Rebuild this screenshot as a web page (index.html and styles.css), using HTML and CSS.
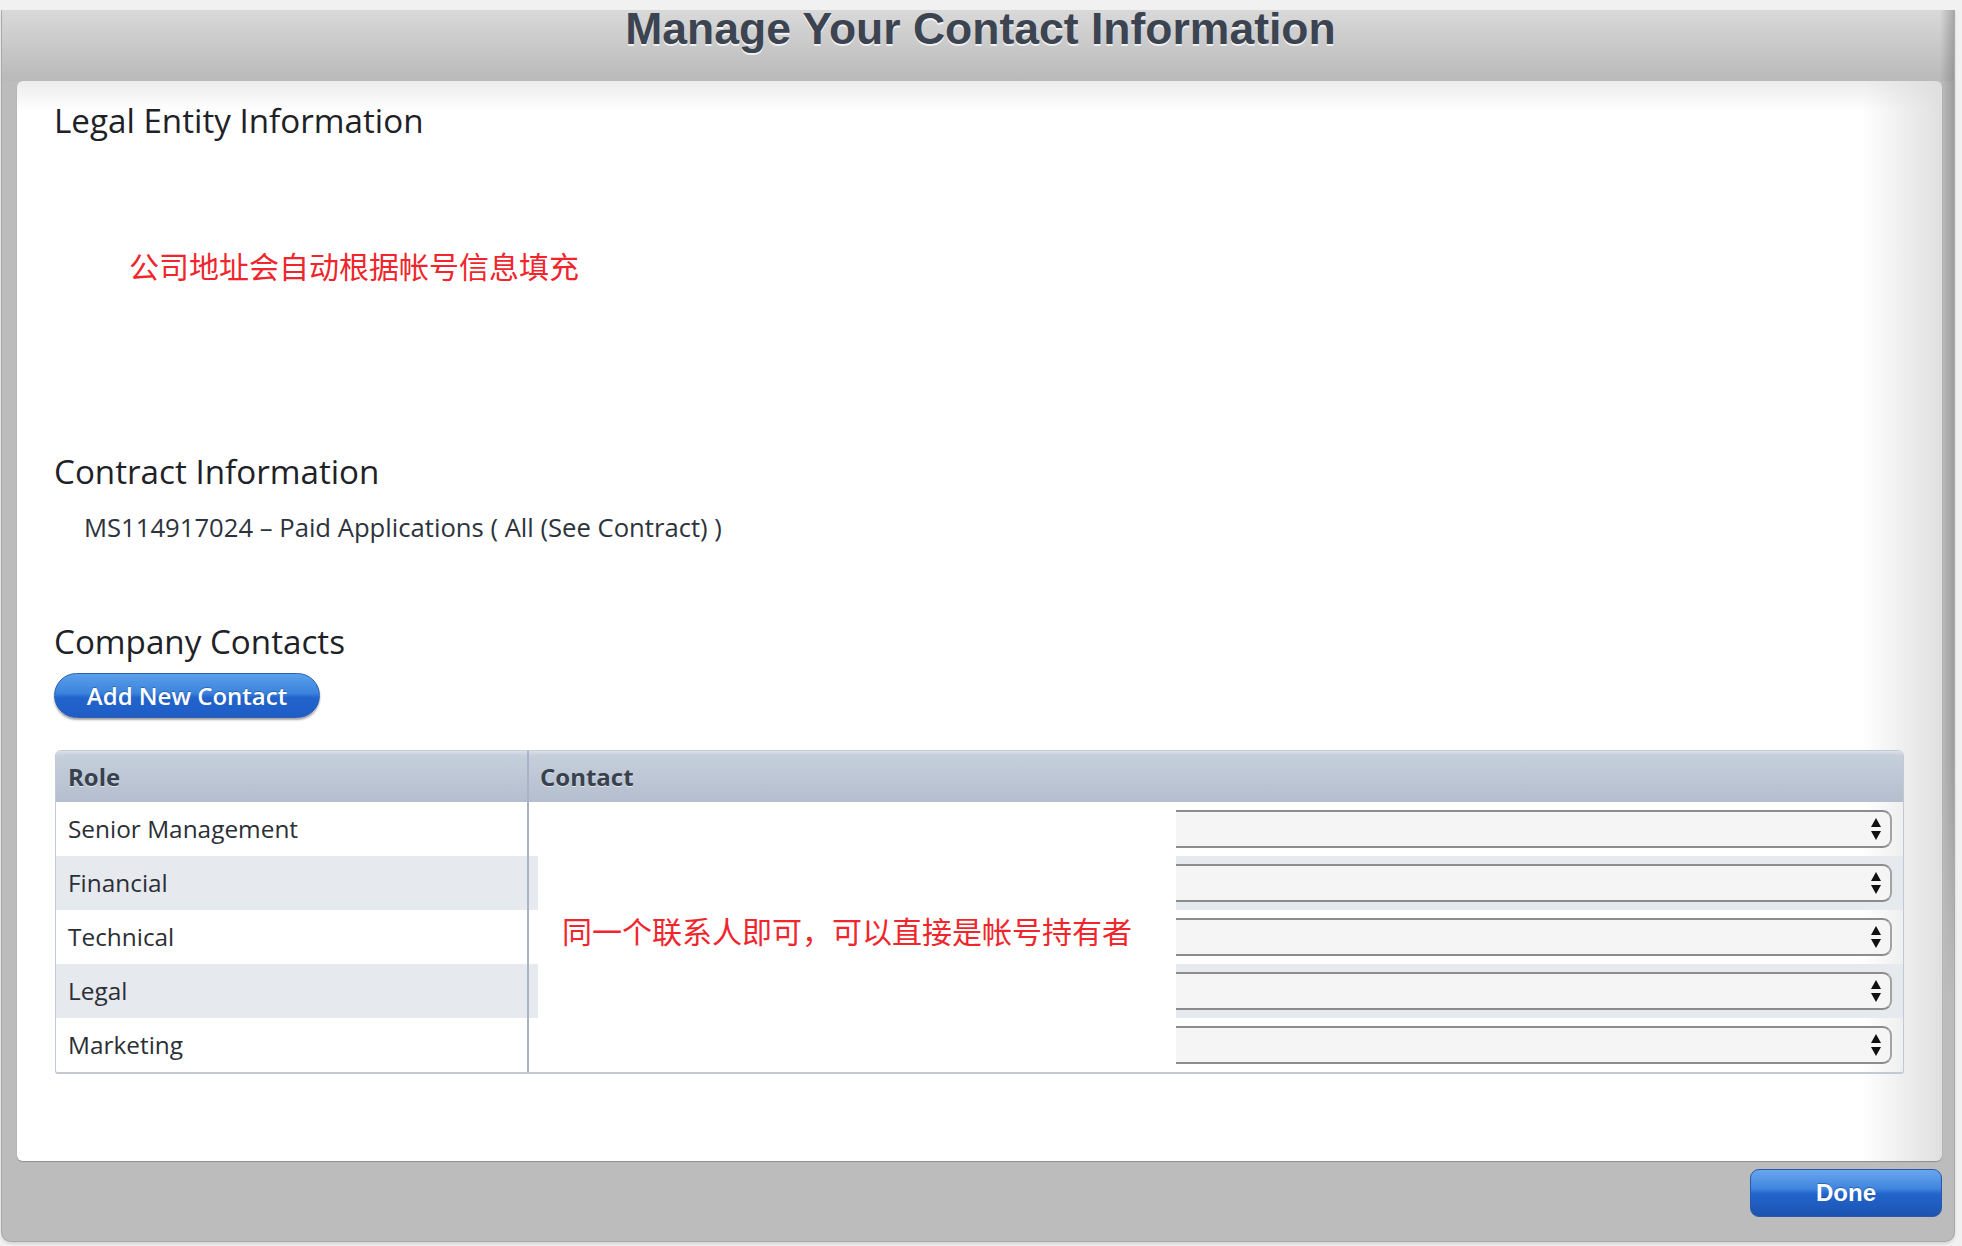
FILE: index.html
```html
<!DOCTYPE html>
<html lang="en">
<head>
<meta charset="utf-8">
<title>Manage Your Contact Information</title>
<link rel="stylesheet" href="styles.css">
</head>
<body>
<div class="dialog">
  <div class="titlebar">
    <h1 class="title">Manage Your Contact Information</h1>
  </div>
  <div class="panel">
    <h2 class="section-title">Legal Entity Information</h2>
    <p class="note note-legal">公司地址会自动根据帐号信息填充</p>
    <h2 class="section-title section-contract">Contract Information</h2>
    <p class="contract-line">MS114917024 – Paid Applications ( All (See Contract) )</p>
    <h2 class="section-title section-contacts">Company Contacts</h2>
    <button class="add-btn" type="button">Add New Contact</button>
    <div class="contacts-table">
      <div class="th th-role">Role</div>
      <div class="th th-contact">Contact</div>
      <div class="roles">
        <div class="role-cell">Senior Management</div>
        <div class="role-cell alt">Financial</div>
        <div class="role-cell">Technical</div>
        <div class="role-cell alt">Legal</div>
        <div class="role-cell">Marketing</div>
      </div>
      <div class="contacts">
        <div class="contact-row"><div class="select"><svg class="arrows" viewBox="0 0 12 24" width="12" height="24"><path d="M6 1 L11 10 L1 10 Z M1 14 L11 14 L6 23 Z" fill="#111"/></svg></div></div>
        <div class="contact-row alt"><div class="select"><svg class="arrows" viewBox="0 0 12 24" width="12" height="24"><path d="M6 1 L11 10 L1 10 Z M1 14 L11 14 L6 23 Z" fill="#111"/></svg></div></div>
        <div class="contact-row"><div class="select"><svg class="arrows" viewBox="0 0 12 24" width="12" height="24"><path d="M6 1 L11 10 L1 10 Z M1 14 L11 14 L6 23 Z" fill="#111"/></svg></div></div>
        <div class="contact-row alt"><div class="select"><svg class="arrows" viewBox="0 0 12 24" width="12" height="24"><path d="M6 1 L11 10 L1 10 Z M1 14 L11 14 L6 23 Z" fill="#111"/></svg></div></div>
        <div class="contact-row"><div class="select"><svg class="arrows" viewBox="0 0 12 24" width="12" height="24"><path d="M6 1 L11 10 L1 10 Z M1 14 L11 14 L6 23 Z" fill="#111"/></svg></div></div>
        <div class="contact-note"><span class="note">同一个联系人即可，可以直接是帐号持有者</span></div>
      </div>
    </div>
  </div>
  <div class="footer">
    <button class="done-btn" type="button">Done</button>
  </div>
</div>
</body>
</html>
```

FILE: styles.css
```css
* { box-sizing: border-box; }
html, body { margin: 0; padding: 0; }
body {
  width: 1962px;
  height: 1246px;
  overflow: hidden;
  background: #f1f1f1;
  font-family: "Open Sans", "Noto Sans CJK SC", sans-serif;
}
.dialog {
  margin: 10px 0 0 1px;
  width: 1954px;
  height: 1232px;
  background:
    linear-gradient(to bottom, rgba(188,188,188,0) 750px, #bcbcbc 1000px) right top / 13px 1000px no-repeat,
    linear-gradient(to right, rgba(120,120,120,0) 0, rgba(120,120,120,.45) 100%) right top / 13px 1000px no-repeat,
    #bcbcbc;
  border: 1px solid #a9a9a9;
  border-top: 0;
  border-radius: 0 0 10px 10px;
  display: flex;
  flex-direction: column;
  box-shadow: 0 2px 3px rgba(0,0,0,.12);
}
.titlebar {
  height: 71px;
  flex: none;
  padding-left: 5px;
  background:
    linear-gradient(to right, rgba(110,110,110,0) calc(100% - 14px), rgba(110,110,110,.45) 100%),
    linear-gradient(to bottom, #d9d9d9 0%, #c9c9c9 50%, #b9b9b9 100%);
  text-align: center;
}
.title {
  margin: 0;
  font-family: "Liberation Sans", Arial, sans-serif;
  font-weight: bold;
  font-size: 44.5px;
  line-height: 38px;
  color: #3b4450;
  text-shadow: 0 2px 0 rgba(255,255,255,.75);
}
.panel {
  flex: none;
  height: 1080px;
  margin: 0 12px 0 15px;
  padding: 20px 37px 0 37px;
  border-radius: 6px;
  background:
    linear-gradient(to right, rgba(255,255,255,0) calc(100% - 80px), rgba(220,220,220,.9) 100%),
    linear-gradient(to bottom, #ececec 0px, #ffffff 30px);
  box-shadow: 0 1px 1px rgba(0,0,0,.25);
  display: flex;
  flex-direction: column;
  align-items: flex-start;
}
.section-title {
  margin: 0;
  font-size: 33.2px;
  line-height: 40px;
  font-weight: 400;
  color: #1e2227;
}
.note {
  color: #f0262c;
  font-family: "Noto Sans CJK SC", sans-serif;
  font-size: 30px;
  line-height: 40px;
}
.note-legal {
  margin: 104px 0 0 75px;
}
.section-contract { margin-top: 167px; }
.contract-line {
  margin: 20px 0 0 30px;
  font-size: 25.65px;
  line-height: 32px;
  color: #2d333c;
}
.section-contacts { margin-top: 78px; }
.add-btn {
  margin-top: 11px;
  width: 266px;
  height: 45px;
  border-radius: 23px;
  border: 1px solid #2b5fb6;
  background: linear-gradient(to bottom, #5aa0ea 0%, #3b82dc 45%, #2264cc 55%, #1f5dc6 100%);
  box-shadow: 0 2px 2px rgba(0,0,0,.35);
  color: #fff;
  font-family: "Open Sans", sans-serif;
  font-weight: 600;
  font-size: 24px;
  line-height: 41px;
  padding: 0;
  text-align: center;
  text-shadow: 0 -1px 0 rgba(0,0,0,.25);
}
.contacts-table {
  margin: 32px 1px 0 1px;
  align-self: stretch;
  display: grid;
  grid-template-columns: 471px 1fr;
  border: 1px solid #c3c9d3;
  border-bottom-width: 2px;
  border-radius: 6px 6px 3px 3px;
  overflow: hidden;
}
.th {
  height: 51px;
  background: linear-gradient(to bottom, #dde2ea 0px, #c6cfdb 4px, #b4bece 100%);
  font-weight: 700;
  font-size: 24px;
  line-height: 51px;
  color: #38414d;
  text-shadow: 0 1px 0 rgba(255,255,255,.6);
}
.th-role { padding-left: 12px; }
.th-contact { padding-left: 11px; border-left: 2px solid #a9b3c5; }
.roles { display: flex; flex-direction: column; }
.role-cell {
  height: 54px;
  padding-left: 12px;
  font-size: 24.4px;
  line-height: 54px;
  color: #2b2f36;
}
.alt { background: #e6e9ee; }
.contacts {
  position: relative;
  border-left: 2px solid #a9b3c5;
  display: flex;
  flex-direction: column;
}
.contact-row {
  height: 54px;
  display: flex;
  align-items: center;
  justify-content: flex-end;
  padding-right: 11px;
}
.select {
  width: 716px;
  height: 38px;
  background: #f5f5f5;
  border-top: 2px solid #8c8c8c;
  border-bottom: 2px solid #8c8c8c;
  border-right: 2px solid #a3a3a3;
  border-radius: 0 9px 9px 0;
  display: flex;
  align-items: center;
  justify-content: flex-end;
  padding-right: 8px;
}
.arrows { display: block; width: 12px; height: 24px; }
.contact-note {
  position: absolute;
  top: 0;
  bottom: 0;
  left: 9px;
  width: 638px;
  background: #fff;
  display: flex;
  align-items: center;
  padding: 0 0 14px 24px;
}
.footer {
  flex: 1;
  display: flex;
  justify-content: flex-end;
  align-items: flex-start;
  padding: 8px 12px 0 0;
}
.done-btn {
  width: 192px;
  height: 48px;
  border-radius: 9px;
  border: 1px solid #2a58a6;
  background: linear-gradient(to bottom, #6aa6ee 0%, #3f86e0 40%, #2365cc 52%, #1c53b2 100%);
  color: #fff;
  font-family: "Liberation Sans", Arial, sans-serif;
  font-weight: bold;
  font-size: 24px;
  padding: 0;
  text-shadow: 0 -1px 0 rgba(0,0,0,.3);
}
```
